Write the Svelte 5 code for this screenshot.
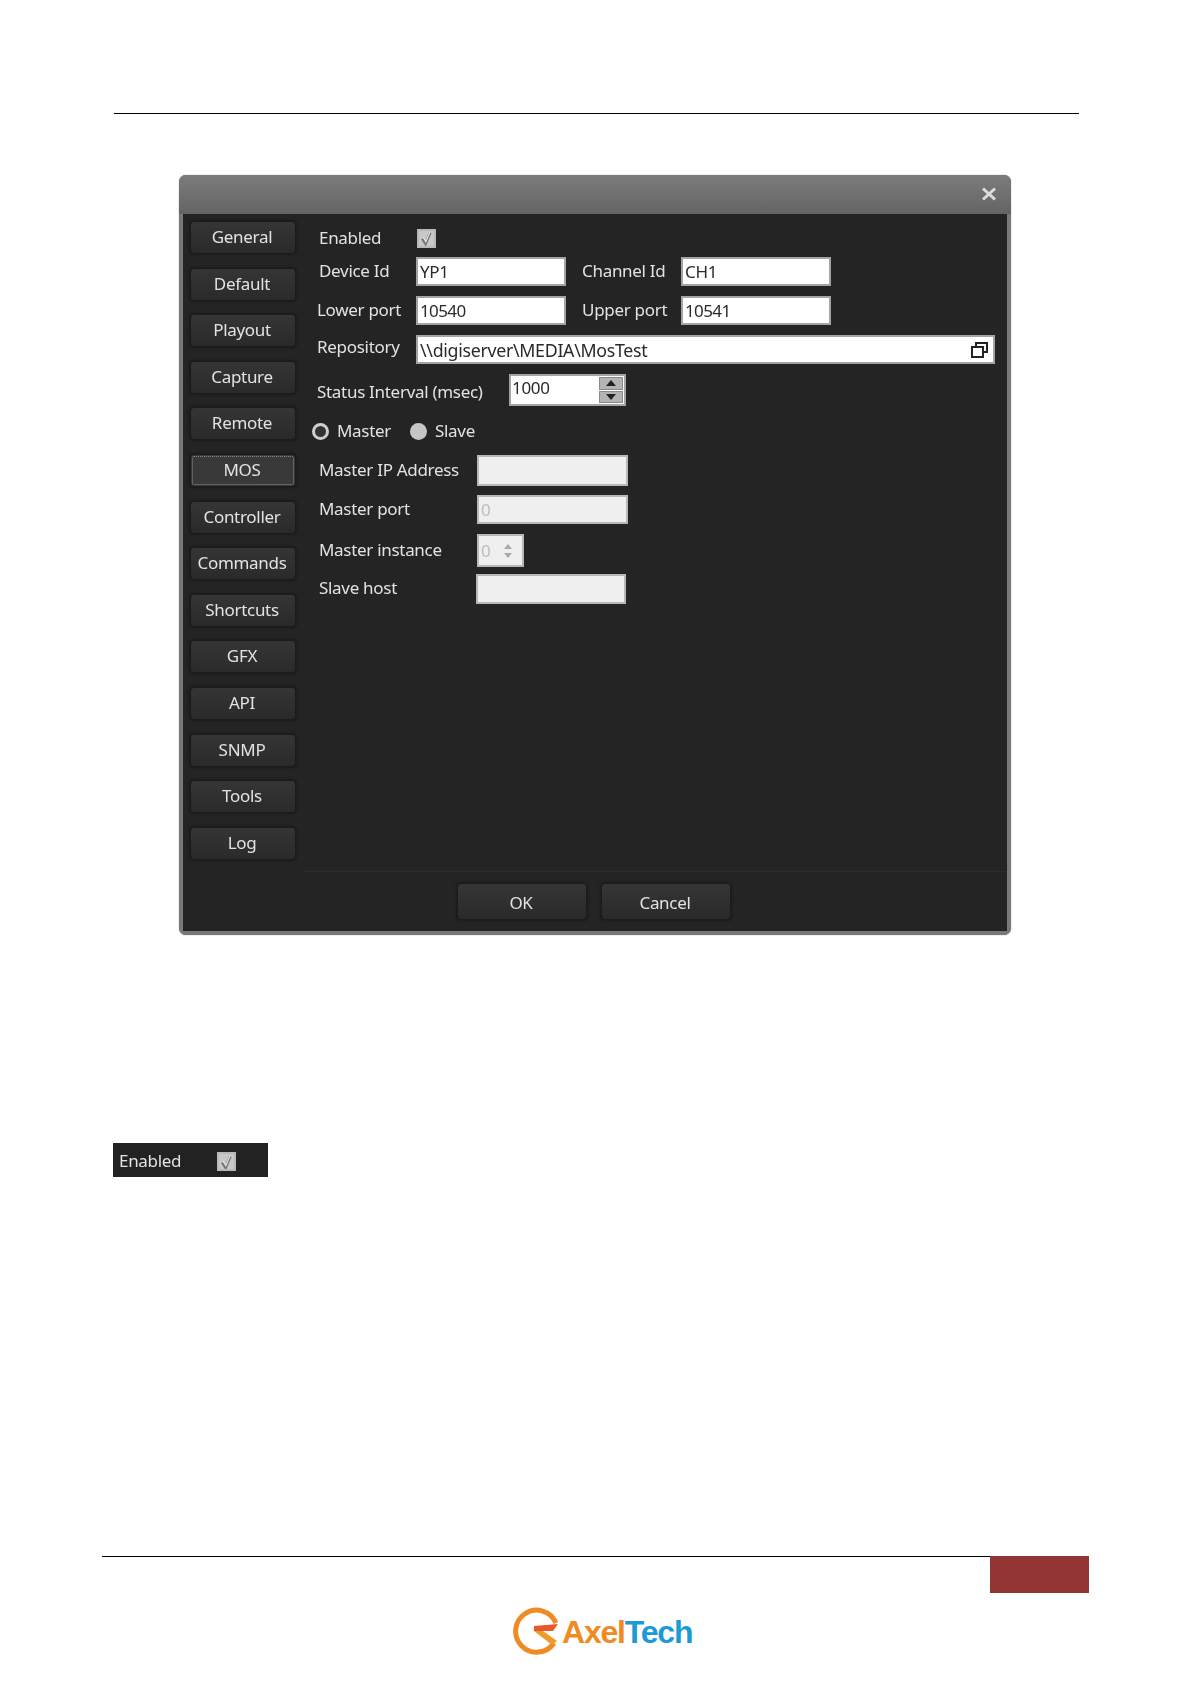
<script>
  const tabs = ['General', 'Default', 'Playout', 'Capture', 'Remote', 'MOS', 'Controller', 'Commands', 'Shortcuts', 'GFX', 'API', 'SNMP', 'Tools', 'Log'];
  const active = 'MOS';
</script>

{#snippet check()}
  <span class="check">
    <svg viewBox="0 0 16 16" width="16" height="16"><path d="M3.5 8.5l3.5 5.5 5-12" fill="none" stroke="#777" stroke-width="3" /><path d="M4.5 7.5l2.8 4.5 4.4-10.6" fill="none" stroke="#f4f4f4" stroke-width="1.1" /></svg>
  </span>
{/snippet}

<div class="page">
  <div class="top-rule"></div>

  <section class="dialog">
    <header class="title">
      <svg class="close" viewBox="0 0 16 14" width="16" height="14"><path d="M2 1.5l12 11M14 1.5l-12 11" stroke="#dcdcdc" stroke-width="3" /></svg>
    </header>
    <div class="dialog-body">
      <div class="main">
        <nav class="tabs">
          {#each tabs as tab}
            <button class="btn" class:focused={tab === active}>{tab}</button>
          {/each}
        </nav>
        <div class="form">
          <div class="row enabled">
            <span class="lbl w97">Enabled</span>
            {@render check()}
          </div>
          <div class="row first">
            <span class="lbl w97">Device Id</span>
            <span class="field w150">YP1</span>
            <span class="lbl second">Channel Id</span>
            <span class="field w150">CH1</span>
          </div>
          <div class="row">
            <span class="lbl w97 out">Lower port</span>
            <span class="field w150 num">10540</span>
            <span class="lbl second">Upper port</span>
            <span class="field w150 num">10541</span>
          </div>
          <div class="row">
            <span class="lbl w97 out repo-lbl">Repository</span>
            <span class="field repo">
              \\digiserver\MEDIA\MosTest
              <svg viewBox="0 0 17 16" width="17" height="16"><path d="M5 4V1h11v9h-3M1 5h11v10H1z" fill="none" stroke="#222" stroke-width="2" /></svg>
            </span>
          </div>
          <div class="row status">
            <span class="lbl out status-lbl">Status Interval (msec)</span>
            <span class="field spin">
              1000
              <span class="arrows">
                <i><svg viewBox="0 0 10 6" width="10" height="6"><path d="M5 0l5 6H0z" fill="#222" /></svg></i>
                <i><svg viewBox="0 0 10 6" width="10" height="6"><path d="M5 6L0 0h10z" fill="#222" /></svg></i>
              </span>
            </span>
          </div>
          <div class="row radios">
            <span class="radio on"></span><span class="lbl master">Master</span>
            <span class="radio"></span><span class="lbl">Slave</span>
          </div>
          <div class="row ip">
            <span class="lbl w158">Master IP Address</span>
            <span class="field off w151"></span>
          </div>
          <div class="row port">
            <span class="lbl w158">Master port</span>
            <span class="field off w151 zero">0</span>
          </div>
          <div class="row inst">
            <span class="lbl w158">Master instance</span>
            <span class="field off mini zero">
              0
              <svg viewBox="0 0 10 20" width="10" height="20"><path d="M5 3l4 5H1zM5 17l-4-5h8z" fill="#aaa" /></svg>
            </span>
          </div>
          <div class="row host">
            <span class="lbl w157">Slave host</span>
            <span class="field off w150"></span>
          </div>
        </div>
      </div>
      <footer class="actions">
        <button class="btn wide">OK</button>
        <button class="btn wide">Cancel</button>
      </footer>
    </div>
  </section>

  <div class="strip">
    <span class="lbl">Enabled</span>
    {@render check()}
  </div>

  <div class="foot">
    <div class="foot-line">
      <div class="red"></div>
    </div>
    <div class="logo">
      <svg viewBox="0 0 48 48" width="48" height="48">
        <path d="M44 16A21 21 0 1 0 42 36" fill="none" stroke="#ee8c23" stroke-width="5" />
        <path d="M22 19L46 17L41 24L22 24z" fill="#e8592a" />
        <path d="M22 24h9l14 10-5 4z" fill="#f09a2a" />
      </svg>
      <span class="logo-text"><b class="axel">Axel</b><b class="tech">Tech</b></span>
    </div>
  </div>
</div>

<style>
  :global(body) {
    margin: 0;
    background: #fff;
  }

  .page {
    width: 1191px;
    height: 1684px;
    position: relative;
    overflow: hidden;
    font-family: "Noto Sans", "Open Sans", sans-serif;
    font-size: 17px;
    letter-spacing: -0.3px;
  }

  .top-rule {
    margin: 113px 0 0 114px;
    width: 965px;
    height: 1px;
    background: #000;
  }

  .dialog {
    margin: 61px 0 0 179px;
    width: 832px;
    height: 760px;
    box-sizing: border-box;
    border-radius: 7px;
    background: #787878;
    padding: 0 4px 4px;
    display: flex;
    flex-direction: column;
    box-shadow: 0 0 1px #555;
    filter: blur(0.3px);
  }

  .title {
    height: 39px;
    flex: none;
    margin: 0 -4px;
    border-radius: 7px 7px 0 0;
    background: linear-gradient(#7c7c7c, #646464);
    display: flex;
    align-items: center;
    justify-content: flex-end;
    padding: 0 14px 2px 0;
    box-sizing: border-box;
  }

  .dialog-body {
    flex: 1;
    background: #242424;
    display: flex;
    flex-direction: column;
    min-height: 0;
  }

  .main {
    flex: 1;
    display: flex;
    min-height: 0;
  }

  .tabs {
    width: 120px;
    box-sizing: border-box;
    padding: 7px 0 0 7px;
    display: flex;
    flex-direction: column;
    gap: 13.6px;
    flex: none;
  }

  .btn {
    width: 106px;
    height: 33px;
    flex: none;
    padding: 0 2px 2px 0;
    box-sizing: border-box;
    border: 1px solid #1b1b1b;
    border-radius: 4px;
    background: linear-gradient(#353535, #2a2a2a);
    box-shadow: 0 0 3px #111;
    color: #e2e2e2;
    font: inherit;
    letter-spacing: inherit;
  }

  .btn.focused {
    outline: 1px dotted #8a8a8a;
    outline-offset: -3px;
    background: #393939;
  }

  .btn.wide {
    width: 130px;
    height: 37px;
    padding: 2px 2px 0 0;
  }

  .form {
    flex: 1;
    padding: 14px 0 0 16px;
    color: #e2e2e2;
    border-bottom: 1px solid #2d2d2d;
  }

  .row {
    display: flex;
    align-items: center;
    margin-top: 10px;
  }

  .row.enabled {
    margin-top: 0;
    height: 20px;
  }

  .row.first {
    margin-top: 9px;
  }

  .row.radios {
    margin: 13px 0 0 -7px;
    height: 24px;
  }

  .row.ip {
    margin-top: 12px;
  }

  .row.port {
    margin-top: 9px;
  }

  .row.host {
    margin-top: 7px;
  }

  .lbl {
    white-space: nowrap;
    flex: none;
    color: #e2e2e2;
    padding-bottom: 2px;
  }

  .w97 {
    width: 97px;
  }

  .w158 {
    width: 158px;
  }

  .w157 {
    width: 157px;
  }

  .out {
    margin-left: -2px;
    width: 99px;
  }

  .repo-lbl {
    padding-bottom: 6px;
  }

  .status-lbl {
    width: 192px;
    padding: 2px 0 0;
  }

  .row.host .lbl {
    padding-bottom: 4px;
  }

  .second {
    width: 99px;
    margin-left: 16px;
  }

  .field {
    height: 29px;
    box-sizing: border-box;
    flex: none;
    background: #fff;
    border: 2px solid #a4a4a4;
    color: #2a2a2a;
    padding-left: 2px;
    display: flex;
    align-items: center;
    justify-content: space-between;
  }

  .num {
    letter-spacing: -0.6px;
  }

  .w150 {
    width: 150px;
  }

  .w151 {
    width: 151px;
  }

  .field.repo {
    width: 579px;
    padding-right: 5px;
    font-size: 17.8px;
  }

  .field.spin {
    width: 117px;
    height: 32px;
    padding: 0 1px 5px 1px;
    position: relative;
  }

  .arrows {
    position: absolute;
    top: 1px;
    right: 1px;
    width: 24px;
    display: flex;
    flex-direction: column;
    gap: 1px;
  }

  .arrows i {
    height: 12.5px;
    background: #b4b4b4;
    border: 1px solid #8a8a8a;
    display: flex;
    align-items: center;
    justify-content: center;
    box-sizing: border-box;
  }

  .field.off {
    background: #efefef;
    border-color: #b8b8b8;
  }

  .row.ip .field {
    height: 31px;
  }

  .zero {
    color: #bdbdbd;
  }

  .field.mini {
    width: 47px;
    height: 33px;
    padding: 0 9px 0 2px;
  }

  .row.host .field {
    height: 30px;
  }

  .radio {
    width: 17px;
    height: 17px;
    border-radius: 50%;
    background: #c6c6c6;
    flex: none;
    box-sizing: border-box;
    margin-right: 8px;
  }

  .radio.on {
    background: #333;
    border: 3px solid #cfcfcf;
  }

  .master {
    width: 73px;
  }

  .actions {
    flex: none;
    height: 59px;
    display: flex;
    gap: 14px;
    padding: 11px 0 0 274px;
    box-sizing: border-box;
  }

  .strip {
    margin: 208px 0 0 113px;
    width: 155px;
    height: 34px;
    box-sizing: border-box;
    background: #222;
    display: flex;
    align-items: center;
    padding: 3px 0 0 6px;
    gap: 35px;
    filter: blur(0.3px);
  }

  .check {
    width: 19px;
    height: 19px;
    box-sizing: border-box;
    border: 2px solid #b8b8b8;
    background: #c8c8c8;
    display: flex;
    align-items: center;
    justify-content: center;
    margin-left: 1px;
    overflow: hidden;
  }

  .foot {
    position: absolute;
    left: 102px;
    top: 1556px;
    width: 987px;
  }

  .foot-line {
    height: 1px;
    background: #000;
    width: 888px;
    position: relative;
  }

  .red {
    position: absolute;
    left: 888px;
    top: 0;
    width: 99px;
    height: 37px;
    background: #933533;
  }

  .logo {
    margin: 50px 0 0 410px;
    display: flex;
    align-items: center;
    gap: 2px;
  }

  .logo-text {
    font-family: "Liberation Sans", sans-serif;
    font-size: 32px;
    letter-spacing: -1.2px;
    margin-top: 3px;
  }

  .axel {
    color: #ee8c23;
  }

  .tech {
    color: #1b9ad6;
  }
</style>
